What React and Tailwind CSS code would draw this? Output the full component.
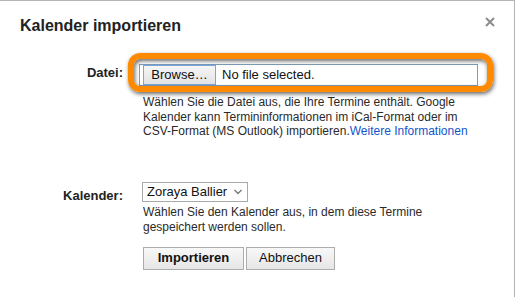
import React from "react";

export default function App() {
  return (
    <div className="relative w-[517px] h-[297px] overflow-hidden bg-white font-['Liberation_Sans',Arial,sans-serif] text-[#222]">
      <div className="relative w-[515px] h-[297px] border-t border-r border-[#b4b4b4] pt-[15px]">
        <h1 className="ml-[20px] text-[16px] leading-[20px] font-bold text-[#222]">
          Kalender importieren
        </h1>
        <button className="absolute left-[484px] top-[15px] w-[12px] h-[12px] flex items-center justify-center">
          <svg width="10" height="10" viewBox="0 0 10 10">
            <path d="M1 1L9 9M9 1L1 9" stroke="#8c8c8c" strokeWidth="2" />
          </svg>
        </button>

        {/* Datei row */}
        <div className="mt-[28px] flex">
          <div className="w-[123px] text-right text-[13px] leading-[18px] font-bold text-[#222]">
            Datei:
          </div>
          <div className="ml-[20px]">
            <div className="-ml-[4px] w-[339px] h-[22px] border border-[#7f9db9] flex items-center pl-[3px] bg-white">
              <div className="w-[73px] h-[20px] border border-[#7aa7e0] bg-gradient-to-b from-[#f6f6f6] to-[#e3e3e3] flex items-center justify-center text-[13px] leading-[18px] text-[#111]">
                Browse…
              </div>
              <span className="ml-[6px] text-[13px] leading-[18px] text-[#111]">No file selected.</span>
            </div>
            <p className="mt-[9px] w-[334px] text-[12px] leading-[14.5px] text-[#2a2a2a]">
              Wählen Sie die Datei aus, die Ihre Termine enthält. Google Kalender kann Termininformationen im iCal-Format oder im CSV-Format (MS Outlook) importieren.<a className="text-[#1155cc]">Weitere Informationen</a>
            </p>
          </div>
        </div>

        {/* Kalender row */}
        <div className="mt-[43px] flex">
          <div className="w-[123px] mt-[5px] text-right text-[13px] leading-[18px] font-bold text-[#222]">
            Kalender:
          </div>
          <div className="ml-[20px]">
            <div className="-ml-[1px] w-[106px] h-[20px] border border-[#a9a9a9] flex items-center justify-between pl-[4px] pr-[5px]">
              <span className="text-[13px] leading-[18px] text-[#111]">Zoraya Ballier</span>
              <svg width="8" height="6" viewBox="0 0 8 6">
                <path d="M0.5 1L4 4.5L7.5 1" fill="none" stroke="#7a7a7a" strokeWidth="1.4" />
              </svg>
            </div>
            <p className="mt-[3px] text-[12px] leading-[15px] text-[#2a2a2a]">
              Wählen Sie den Kalender aus, in dem diese Termine
              <br />
              gespeichert werden sollen.
            </p>
            <div className="mt-[12px] flex gap-[2px]">
              <button className="w-[101px] h-[23px] border border-[#acacac] bg-gradient-to-b from-[#f8f8f8] to-[#e6e6e6] text-[13px] leading-[18px] font-bold text-[#111]">
                Importieren
              </button>
              <button className="w-[89px] h-[23px] border border-[#acacac] bg-gradient-to-b from-[#f8f8f8] to-[#e6e6e6] text-[13px] leading-[18px] text-[#111]">
                Abbrechen
              </button>
            </div>
          </div>
        </div>

        {/* Orange highlight ring */}
        <div className="pointer-events-none absolute left-[128px] top-[52px] w-[365px] h-[39px] rounded-[12px] border-[6px] border-[#ff8a00] shadow-[1px_2px_4px_rgba(0,0,0,0.6),inset_1px_2px_4px_rgba(0,0,0,0.6)]"></div>
      </div>
    </div>
  );
}
